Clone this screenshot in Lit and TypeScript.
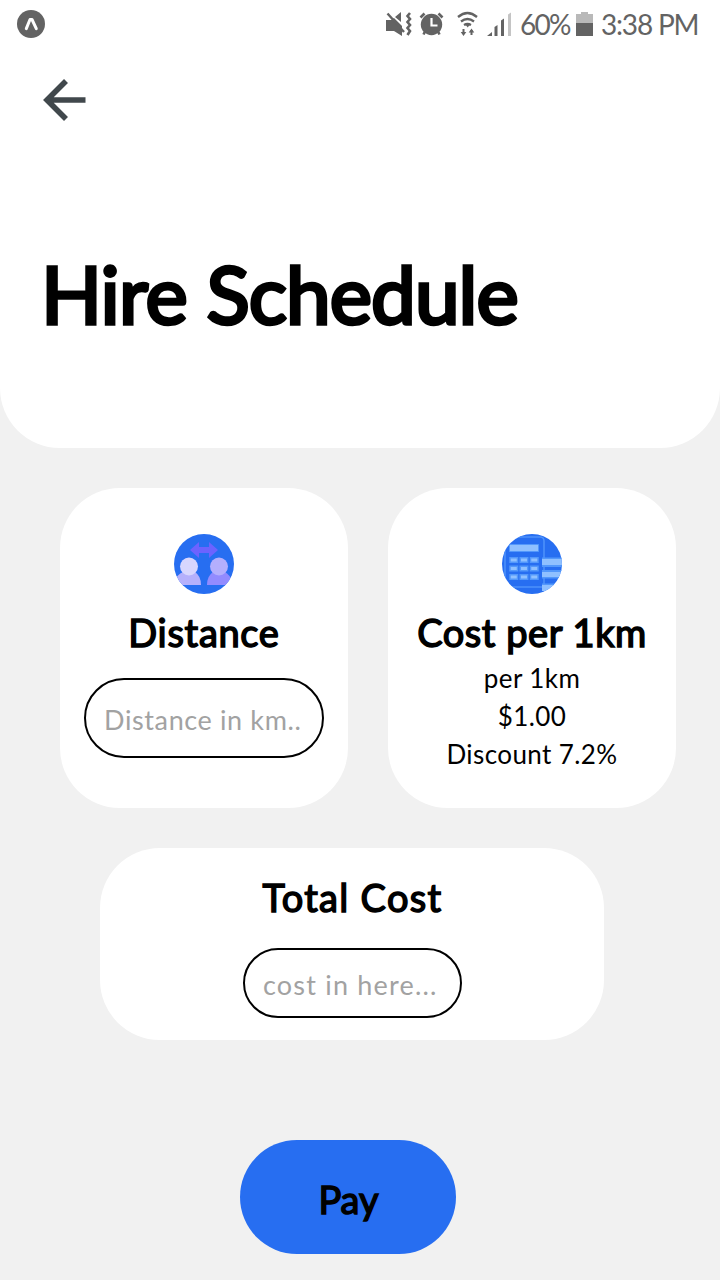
import { LitElement, html, css } from "lit";
import { customElement } from "lit/decorators.js";

@customElement("status-bar")
class StatusBar extends LitElement {
  static styles = css`
    :host { display: flex; height: 48px; align-items: center; padding: 0 21px 0 17px; box-sizing: border-box; color: #636363; }
    svg { display: block; flex: none; }
    .grow { flex: 1; }
    .text { font: 400 28px/48px Lato, sans-serif; white-space: nowrap; }
    .pct { width: 51px; margin-left: 8px; letter-spacing: -1.700px; margin-right: 5px; }
    .time { width: 98px; margin-left: 8px; letter-spacing: -1.200px; }
  `;
  render() {
    return html`
      <svg width="28" height="48" viewBox="0 0 28 48">
        <circle cx="14" cy="24" r="14" fill="#636363" />
        <path d="M9.3 28.6 13 19.500h2l4.300 9.100" fill="none" stroke="#fff" stroke-width="3" stroke-linecap="round" stroke-linejoin="round" />
      </svg>
      <span class="grow"></span>
      <svg width="127" height="48" viewBox="385 0 127 48" fill="#636363">
        <path d="M386 20h5l3-2 8 8v10l-8-5h-8zM395 17l6-5v10z" />
        <path d="M387.500 13.500 404 32" stroke="#636363" stroke-width="2.400" />
        <path d="M410 13l-2.500 3 2.500 3-2.500 3 2.500 3-2.500 3 2.500 3-2.500 4" fill="none" stroke="#636363" stroke-width="2.600" />
        <circle cx="431.500" cy="24.500" r="10.700" />
        <path d="M420.500 17.500l4-4M442.500 17.500l-4-4M423.500 34.500l1.500-3M439.500 34.500l-1.500-3" stroke="#636363" stroke-width="2.600" />
        <path d="M431.500 18v7.500h6" fill="none" stroke="#fff" stroke-width="2.200" />
        <path d="M458 17q9.500-8 19 0M461 21.500q6.500-5 13 0M464 25q3.500-2 7 0" fill="none" stroke="#636363" stroke-width="2.300" />
        <path d="M465.500 24.500h4.400l-2.200 3z" />
        <path d="M463.500 29v5M471.500 35v-5" stroke="#636363" stroke-width="2" />
        <path d="M460.700 32h5.600l-2.800 4zM468.700 32.500h5.600l-2.800-4z" />
        <path d="M487 36l5-4v4zM494.500 36v-9l3-2v11zM501 36V20.500l3-2V36z" />
        <path d="M508 36V14.500l3-2V36z" fill="#c4c4c4" />
      </svg>
      <span class="text pct">60%</span>
      <svg width="17" height="48" viewBox="0 0 17 48">
        <path d="M0 14h5v-2h7v2h5v10H0z" fill="#b9b9b9" />
        <path d="M0 23h17v13H0z" fill="#636363" />
      </svg>
      <span class="text time">3:38 PM</span>
    `;
  }
}

@customElement("app-root")
class AppRoot extends LitElement {
  static styles = css`
    :host { display: block; width: 720px; height: 1280px; overflow: hidden; background: #f1f1f1; color: #000; font-family: Lato, sans-serif; }
    * { box-sizing: border-box; }
    svg { display: block; }
    .header { height: 448px; background: #fff; border-radius: 0 0 60px 60px; }
    .back { display: block; margin: 31px 0 0 42px; padding: 0; border: 0; background: none; }
    h1, h2, p { margin: 0; white-space: nowrap; }
    h1, h2, .pay { stroke-linejoin: round; }
    h1 { margin: 124px 0 0 41px; font-size: 80px; line-height: 96px; font-weight: 400; letter-spacing: -0.900px; -webkit-text-stroke: 3.500px #000; }
    .cards { display: flex; gap: 40px; padding: 40px 0 0 60px; }
    .card { width: 288px; height: 320px; border-radius: 60px; background: #fff; display: flex; flex-direction: column; align-items: center; padding-top: 46px; }
    h2 { font-size: 38px; line-height: 46px; font-weight: 400; -webkit-text-stroke: 1.500px #000; }
    .card h2 { margin-top: 15px; }
    .t-distance { letter-spacing: 0.700px; }
    .t-cost { letter-spacing: 0.550px; }
    .t-total { letter-spacing: 1.300px; }
    p { font-size: 26px; line-height: 38px; letter-spacing: 0.400px; }
    .lines { margin-top: 4px; text-align: center; }
    input { border: 2px solid #000; border-radius: 40px; background: #fff; font: 400 27px/36px Lato, sans-serif; padding: 3px 0 0 18px; outline: none; }
    input::placeholder { color: #a2a2a2; opacity: 1; }
    .distance { width: 240px; height: 80px; margin-top: 23px; letter-spacing: 0.620px; }
    .cost { width: 219px; height: 70px; margin-top: 28px; letter-spacing: 1.200px; }
    .total { width: 504px; height: 192px; margin: 40px 0 0 100px; border-radius: 60px; background: #fff; display: flex; flex-direction: column; align-items: center; padding: 26px 0 0 1px; }
    .pay { display: flex; justify-content: center; width: 216px; height: 114px; margin: 100px 0 0 240px; border: 0; border-radius: 57px; background: #276ef1; color: #000; padding: 36px 0 0 1px; align-items: flex-start; font: 400 38px/46px Lato, sans-serif; -webkit-text-stroke: 1.500px #000; }
  `;
  render() {
    return html`
      <header class="header">
        <status-bar></status-bar>
        <button class="back" aria-label="Back">
          <svg width="44" height="42" viewBox="0 0 44 42" fill="none" stroke="#41484c" stroke-width="5.600">
            <path d="M43.500 21H5M24 2 5 21 24 40" />
          </svg>
        </button>
        <h1 class="title">Hire Schedule</h1>
      </header>
      <section class="cards">
        <div class="card">
          <svg width="60" height="60" viewBox="0 0 60 60">
            <defs><clipPath id="a"><circle cx="30" cy="30" r="30" /></clipPath></defs>
            <g clip-path="url(#a)">
              <path fill="#276ef1" d="M0 0h60v60H0z" />
              <path fill="#6c63ff" d="M16 16l9-8v5h10V8l9 8-9 8v-5H25v5z" />
              <path fill="#b5b0fc" d="M1 51V48q2-8 8-10h12q6 4 6 13z" />
              <circle cx="15" cy="32.500" r="9" fill="#d8d6fe" />
              <path fill="#928bff" d="M33 51q0-9 6-13h12q5 3 7 9v4z" />
              <circle cx="45" cy="32.500" r="9" fill="#b4affd" />
            </g>
          </svg>
          <h2 class="t-distance">Distance</h2>
          <input class="distance" placeholder="Distance in km.." />
        </div>
        <div class="card">
          <svg width="60" height="60" viewBox="0 0 60 60">
            <defs><clipPath id="b"><circle cx="30" cy="30" r="30" /></clipPath></defs>
            <g clip-path="url(#b)">
              <path fill="#276ef1" d="M0 0h60v60H0z" />
              <path d="M3 60V3M3 3H38q4 0 4 4V53H7" fill="none" stroke="#4d91fa" stroke-width="1.600" />
              <path fill="#8fc0ff" stroke="#5398fb" d="M7.500 10.500h29v7h-29z" />
              <g fill="#8fc0ff" stroke="#5398fb" stroke-width="1.500">
                <path d="M8 23.700h7.500v4.600H8zM18.200 23.700h7.500v4.600h-7.500zM28.500 23.700H36v4.600h-7.500z" />
                <path d="M8 32.200h7.500v4.600H8zM18.200 32.200h7.500v4.600h-7.500zM28.500 32.200H36v4.600h-7.500z" />
                <path d="M8 40.700h7.500v4.600H8zM18.200 40.700h7.500v4.600h-7.500zM28.500 40.700H36v4.600h-7.500z" />
              </g>
              <path fill="#8fc0ff" d="M40 25h20v6H40zM40 38h20v5H40zM40 51h20v6H40z" />
              <path fill="#5398fb" d="M40 23.500h20V25H40zM40 31h20v2H40zM40 36h20v2H40zM40 43h20v1.500H40zM40 49.500h20V51H40z" />
            </g>
          </svg>
          <h2 class="t-cost">Cost per 1km</h2>
          <div class="lines">
            <p class="l1">per 1km</p>
            <p class="l2">$1.00</p>
            <p class="l3">Discount 7.2%</p>
          </div>
        </div>
      </section>
      <section class="total">
        <h2 class="t-total">Total Cost</h2>
        <input class="cost" placeholder="cost in here..." />
      </section>
      <button class="pay">Pay</button>
    `;
  }
}
